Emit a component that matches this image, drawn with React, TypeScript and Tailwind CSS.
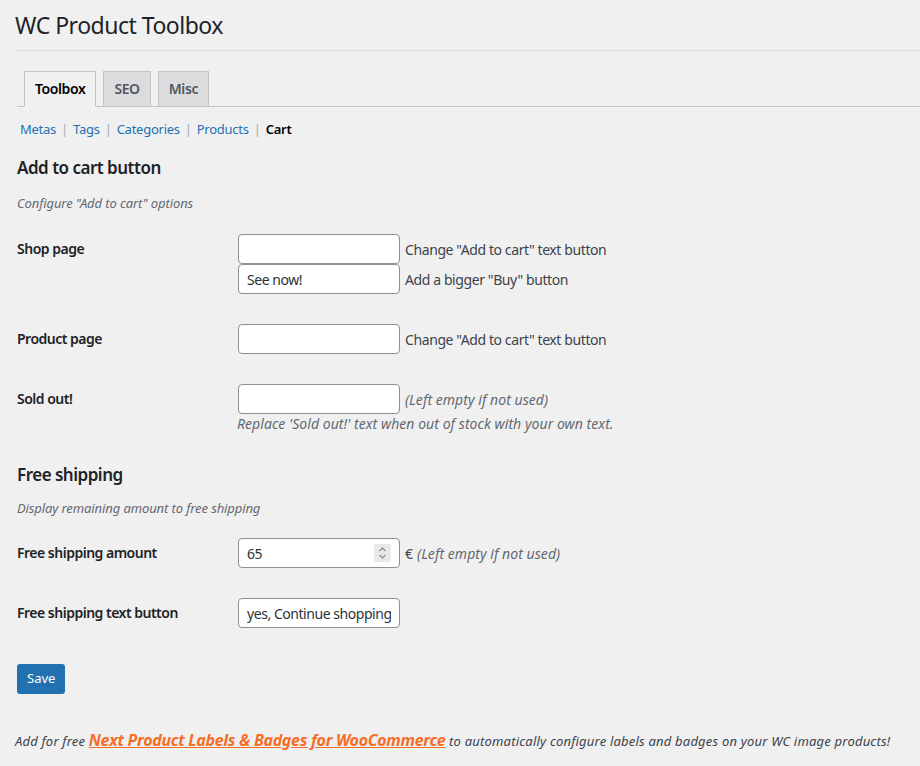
import * as React from 'react';

const font = { fontFamily: '"Noto Sans", "Open Sans", Arial, sans-serif' };

function Field({ value = '', type = 'text' }: { value?: string; type?: string }) {
  return (
    <input
      type={type}
      defaultValue={value}
      className="h-[30px] w-[162px] rounded-[4px] border border-[#8c8f94] bg-white px-2 text-[14px] tracking-[-0.45px] text-[#2c3338] outline-none [appearance:textfield]"
    />
  );
}

function NumberField({ value }: { value: string }) {
  return (
    <div className="relative">
      <Field type="number" value={value} />
      {/* spinner, drawn since headless chrome hides it */}
      <div className="absolute top-[6px] right-[9px] flex h-[18px] w-[17px] flex-col items-center justify-center bg-[#e9e9ed]">
        <svg width="9" height="14" viewBox="0 0 9 14" fill="none" stroke="#8a8a8a" strokeWidth="1.2">
          <path d="M1.5 5 4.5 2 7.5 5" />
          <path d="M1.5 9 4.5 12 7.5 9" />
        </svg>
      </div>
    </div>
  );
}

function Row({ label, children, className = '' }: { label: string; children: React.ReactNode; className?: string }) {
  return (
    <div className={`flex ${className}`}>
      <div className="w-[221px] shrink-0 pt-[5px] text-[14px] leading-[20px] font-semibold tracking-[-0.5px] text-[#1d2327]">
        {label}
      </div>
      <div className="flex flex-col">{children}</div>
    </div>
  );
}

function Note({ children }: { children: React.ReactNode }) {
  return <span className="ml-[5px] text-[14px] tracking-[-0.4px] text-[#3c434a]">{children}</span>;
}

function Help({ children, className = '' }: { children: React.ReactNode; className?: string }) {
  return <span className={`text-[14px] italic tracking-[0.05px] text-[#646970] ${className}`}>{children}</span>;
}

export default function App() {
  const tabs = ['Toolbox', 'SEO', 'Misc'];
  const links = ['Metas', 'Tags', 'Categories', 'Products'];

  return (
    <div className="min-h-[766px] w-[920px] bg-[#f0f0f1] pl-[15px] text-[#3c434a]" style={font}>
      <h1 className="border-b border-[#dcdcde] pt-[9px] pb-[9px] text-[23px] leading-[32px] font-normal tracking-[-0.5px] text-[#1d2327]">
        WC Product Toolbox
      </h1>

      <div className="ml-[2px] mt-[20px] flex border-b border-[#c3c4c7]">
        {tabs.map((t, i) => (
          <div
            key={t}
            className={`-mb-px ml-[7px] h-[36px] border border-[#c3c4c7] px-[10px] text-[14px] leading-[34px] font-semibold tracking-[-0.4px] ${
              i === 0 ? 'border-b-[#f0f0f1] bg-[#f0f0f1] text-[#000]' : 'bg-[#dcdcde] text-[#50575e]'
            }`}
          >
            {t}
          </div>
        ))}
      </div>

      <div className="ml-[5px] mt-[13px] flex text-[13px] leading-[18px] tracking-[-0.25px]">
        {links.map((l) => (
          <span key={l} className="text-[#a7aaad]">
            <span className="text-[#2271b1]">{l}</span>
            <span className="mx-[5px]">|</span>
          </span>
        ))}
        <span className="font-semibold text-[#000]">Cart</span>
      </div>

      <div className="ml-[2px]">
        <h2 className="mt-[18px] text-[17px] leading-[24px] font-semibold tracking-[-0.5px] text-[#1d2327]">Add to cart button</h2>
        <p className="mt-[14px] text-[13px] italic leading-[18px] tracking-[-0.1px] text-[#646970]">Configure "Add to cart" options</p>

        <Row label="Shop page" className="mt-[22px]">
          <div className="flex items-center">
            <Field />
            <Note>Change "Add to cart" text button</Note>
          </div>
          <div className="flex items-center">
            <Field value="See now!" />
            <Note>Add a bigger "Buy" button</Note>
          </div>
        </Row>

        <Row label="Product page" className="mt-[30px]">
          <div className="flex items-center">
            <Field />
            <Note>Change "Add to cart" text button</Note>
          </div>
        </Row>

        <Row label="Sold out!" className="mt-[30px]">
          <div className="flex items-center">
            <Field />
            <Help className="ml-[5px]">(Left empty if not used)</Help>
          </div>
          <Help className="-ml-px leading-[20px]">Replace 'Sold out!' text when out of stock with your own text.</Help>
        </Row>

        <h2 className="mt-[29px] text-[17px] leading-[24px] font-semibold tracking-[-0.5px] text-[#1d2327]">Free shipping</h2>
        <p className="mt-[12px] text-[13px] italic leading-[18px] tracking-[-0.1px] text-[#646970]">Display remaining amount to free shipping</p>

        <Row label="Free shipping amount" className="mt-[21px]">
          <div className="flex items-center">
            <NumberField value="65" />
            <span className="ml-[5px] text-[14px] text-[#3c434a]">€</span>
            <Help className="ml-[4px]">(Left empty if not used)</Help>
          </div>
        </Row>

        <Row label="Free shipping text button" className="mt-[30px]">
          <Field value="yes, Continue shopping" />
        </Row>

        <button className="mt-[36px] h-[30px] rounded-[3px] bg-[#2271b1] px-[10px] text-[13px] text-white">Save</button>
      </div>

      <p className="mt-[34px] text-[13px] italic tracking-[0.2px] text-[#3c434a]">
        Add for free{' '}
        <span className="text-[16px] font-bold tracking-[-0.3px] text-[#f56e28] underline">
          Next Product Labels &amp; Badges for WooCommerce
        </span>{' '}
        to automatically configure labels and badges on your WC image products!
      </p>
    </div>
  );
}
